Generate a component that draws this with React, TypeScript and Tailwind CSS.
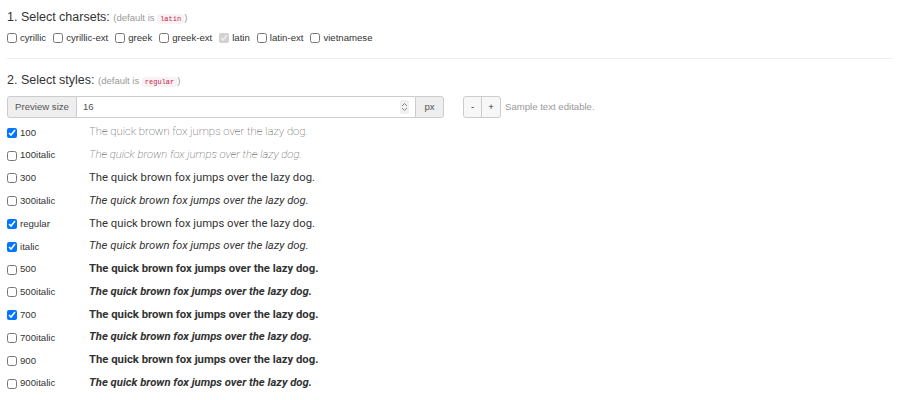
import { useState } from "react";

const charsets = [
  { name: "cyrillic", checked: false },
  { name: "cyrillic-ext", checked: false },
  { name: "greek", checked: false },
  { name: "greek-ext", checked: false },
  { name: "latin", checked: true, disabled: true },
  { name: "latin-ext", checked: false },
  { name: "vietnamese", checked: false },
];

// 300 and 500 fall back to neighbouring weights in the preview
const styles = [
  { name: "100", weight: "font-thin", italic: false, checked: true },
  { name: "100italic", weight: "font-thin", italic: true, checked: false },
  { name: "300", weight: "font-normal", italic: false, checked: false },
  { name: "300italic", weight: "font-normal", italic: true, checked: false },
  { name: "regular", weight: "font-normal", italic: false, checked: true },
  { name: "italic", weight: "font-normal", italic: true, checked: true },
  { name: "500", weight: "font-bold", italic: false, checked: false },
  { name: "500italic", weight: "font-bold", italic: true, checked: false },
  { name: "700", weight: "font-bold", italic: false, checked: true },
  { name: "700italic", weight: "font-bold", italic: true, checked: false },
  { name: "900", weight: "font-bold", italic: false, checked: false },
  { name: "900italic", weight: "font-bold", italic: true, checked: false },
];

function Code({ children }: { children: string }) {
  return (
    <code className="rounded-[3px] bg-[#f9f2f4] px-[3px] py-[1px] font-['Liberation_Mono',monospace] text-[7px] text-[#c7254e]">
      {children}
    </code>
  );
}

export default function App() {
  const [size, setSize] = useState("16");

  return (
    <div className="min-h-[400px] bg-white px-[7px] pt-[8px] font-['Liberation_Sans',Arial,sans-serif] text-[#333]">
      <h3 className="text-[12.5px] leading-[18px]">
        1. Select charsets:{" "}
        <small className="text-[9.5px] text-[#999]">
          (default is <Code>latin</Code>)
        </small>
      </h3>
      <div className="mt-[3px] flex items-center gap-[7px] text-[9.6px]">
        {charsets.map((c) => (
          <label key={c.name} className="flex items-center gap-[3px]">
            <input
              type="checkbox"
              defaultChecked={c.checked}
              disabled={c.disabled}
              className="m-0 h-[10px] w-[10px]"
            />
            {c.name}
          </label>
        ))}
      </div>

      <hr className="mt-[13px] border-t border-[#eee]" />

      <h3 className="mt-[12px] text-[12.5px] leading-[18px]">
        2. Select styles:{" "}
        <small className="text-[9.5px] text-[#999]">
          (default is <Code>regular</Code>)
        </small>
      </h3>

      <div className="mt-[5px] flex items-center text-[9.6px]">
        <div className="flex h-[22px] w-[437px]">
          <span className="flex w-[70px] items-center justify-center rounded-l-[3px] border border-[#ccc] bg-[#eee] text-[#555]">
            Preview size
          </span>
          <div className="flex min-w-0 flex-1 items-center border-y border-[#ccc] bg-white">
            <input
              type="text"
              value={size}
              onChange={(e) => setSize(e.target.value)}
              className="min-w-0 flex-1 bg-transparent px-[6px] text-[9.6px] text-[#555] outline-none"
            />
            <span className="mr-[6px] flex h-[14px] w-[9px] items-center justify-center rounded-[2px] bg-[#f0f0f0]">
              <svg width="7" height="10" viewBox="0 0 7 10" fill="none" stroke="#888" strokeWidth="1">
                <path d="M1 4 L3.5 1.5 L6 4" />
                <path d="M1 6 L3.5 8.5 L6 6" />
              </svg>
            </span>
          </div>
          <span className="flex w-[29px] items-center justify-center rounded-r-[3px] border border-[#ccc] bg-[#eee] text-[#555]">
            px
          </span>
        </div>
        <div className="ml-[19px] flex h-[22px] rounded-[3px] border border-[#ccc] bg-[#f7f7f7] text-[#333]">
          <button className="w-[18px] border-r border-[#ccc]">-</button>
          <button className="w-[18px]">+</button>
        </div>
        <span className="ml-[4px] text-[#999]">Sample text editable.</span>
      </div>

      <div className="mt-[3px]">
        {styles.map((s) => (
          <div key={s.name} className="flex h-[22.8px] items-center">
            <label className="flex w-[82px] items-center gap-[3px] text-[9.6px]">
              <input
                type="checkbox"
                defaultChecked={s.checked}
                className="m-0 h-[10px] w-[10px]"
              />
              {s.name}
            </label>
            <span
              contentEditable
              suppressContentEditableWarning
              className={`font-['Roboto',sans-serif] text-[11.3px] outline-none ${s.weight} ${s.italic ? "italic" : ""}`}
            >
              The quick brown fox jumps over the lazy dog.
            </span>
          </div>
        ))}
      </div>
    </div>
  );
}
